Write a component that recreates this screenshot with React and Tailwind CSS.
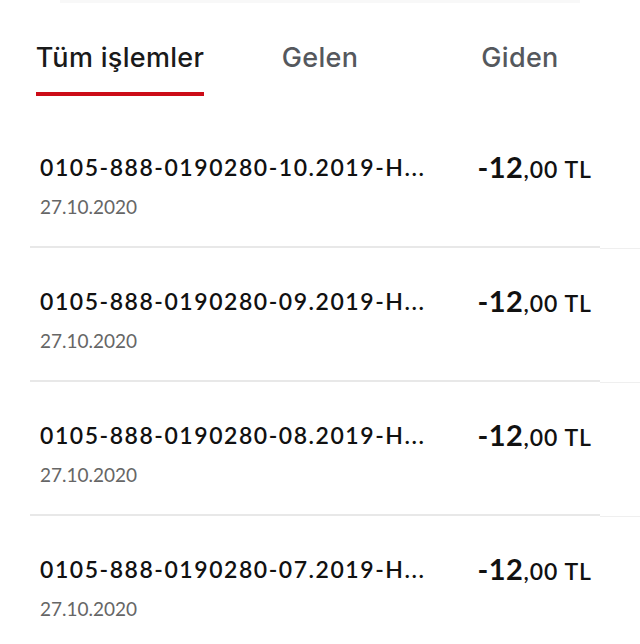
import React from "react";

const rows = ["10", "09", "08", "07"];

function Row({ m }) {
  return (
    <div className="flex w-full">
      <div className="ml-[30px] w-[570px] h-[134px] border-b-2 border-[#e8e8e8] flex pl-[10px] pr-[8px] pt-[38px]">
        <div className="flex-1 flex flex-col">
          <div className="text-[23px] leading-[30px] font-semibold text-[#111] tracking-[1.55px] whitespace-nowrap" style={{ fontFamily: "Lato, sans-serif" }}>
            {`0105-888-0190280-${m}.2019-H...`}
          </div>
          <div className="mt-[13px] text-[19px] leading-[24px] text-[#666]" style={{ fontFamily: "Lato, sans-serif" }}>
            27.10.2020
          </div>
        </div>
        <div className="text-[#111] whitespace-nowrap leading-[30px]" style={{ fontFamily: "Lato, sans-serif" }}>
          <span className="text-[29px] font-bold tracking-[0.5px]">-12</span>
          <span className="text-[23px] font-semibold tracking-[1px]">,00 TL</span>
        </div>
      </div>
      <div className="flex-1 self-end h-px bg-[#efefef] -mb-px"></div>
    </div>
  );
}

export default function App() {
  return (
    <div className="w-[640px] h-[644px] bg-white overflow-hidden">
      <div className="h-[114px] flex flex-col">
        <div className="h-[3px] mx-[60px] bg-[#f8f8f8]"></div>
        <div className="flex px-[20px] pt-[36px]" style={{ fontFamily: "Inter, sans-serif" }}>
          <div className="w-[200px] flex flex-col items-center">
            <div className="flex flex-col items-stretch">
              <div className="text-[27px] leading-[38px] font-medium text-[#1a1a1a] tracking-[0.3px]">Tüm işlemler</div>
              <div className="mt-[15px] h-[4px] bg-[#cc0c17]"></div>
            </div>
          </div>
          <div className="w-[200px] flex justify-center">
            <div className="text-[27px] leading-[38px] font-medium text-[#55585d] tracking-[0.3px]">Gelen</div>
          </div>
          <div className="w-[200px] flex justify-center">
            <div className="text-[27px] leading-[38px] font-medium text-[#55585d] tracking-[0.3px]">Giden</div>
          </div>
        </div>
      </div>
      {rows.map((m) => (
        <Row key={m} m={m} />
      ))}
    </div>
  );
}
